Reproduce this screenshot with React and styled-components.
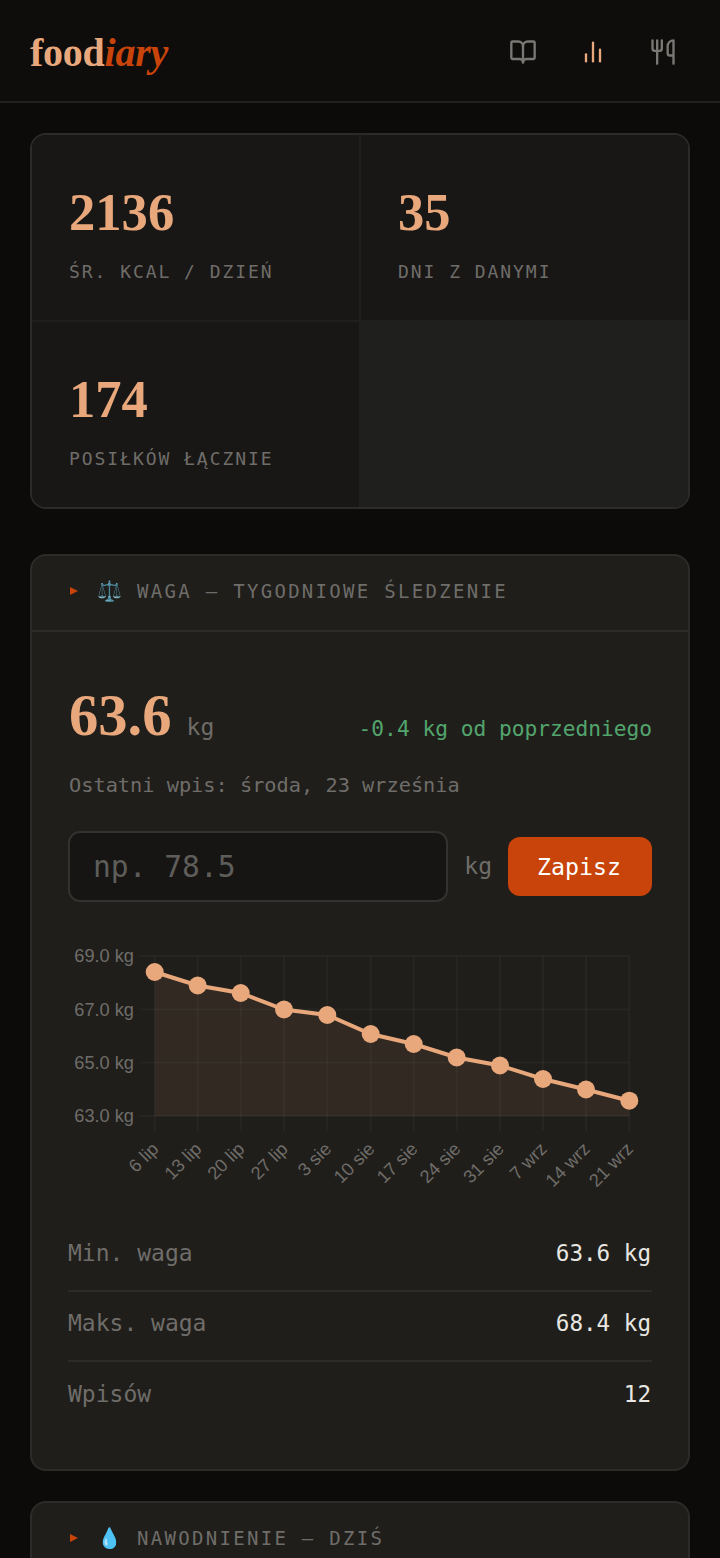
import React from "react";
import styled, { createGlobalStyle } from "styled-components";

const Global = createGlobalStyle`
  html, body { margin: 0; padding: 0; background: #0c0b0a; }
  body { font-family: "DejaVu Sans Mono", monospace; line-height: 1.6; color: #e8e6e1; }
`;
const Page = styled.div`
  width: 720px; height: 1558px; overflow: hidden; background: #0c0b0a;
`;
const Header = styled.header`
  height: 97px; display: flex; align-items: center; justify-content: space-between;
  padding: 4px 31px 0 30px; background: #0e0d0c; border-bottom: 2px solid #222120;
`;
const Logo = styled.div`
  font-family: "Liberation Serif", serif; font-weight: 700; font-size: 40px; letter-spacing: -0.25px; color: #e8a87c; line-height: 1;
  em { color: #c8440a; font-style: italic; }
`;
const Nav = styled.nav`display: flex; gap: 18px; margin-top: -2px;`;
const NavButton = styled.div`
  display: flex; padding: 12px; color: ${p => (p.$active ? "#e8a87c" : "#7a7874")};
`;
const Main = styled.main`
  padding: 30px; display: flex; flex-direction: column;
`;
const Card = styled.section`
  border: 2px solid #2c2b29; border-radius: 16px; overflow: hidden; background: #1f1e1b;
  margin-bottom: ${p => p.$mb || 30}px;
`;
const StatGrid = styled.div`
  display: grid; grid-template-columns: 1fr 1fr; gap: 2px; background: #1f1f1d;
`;
const StatCell = styled.div`
  height: 185px; box-sizing: border-box; padding: 36px 36px 36px 37px; background: #181716;
`;
const StatValue = styled.div`
  font-family: "Liberation Serif", serif; font-weight: 700; font-size: 52.6px; color: #e8a87c; line-height: 83px;
`;
const StatLabel = styled.div`
  font-size: 18px; letter-spacing: 1.95px; color: #6f6d69; line-height: 30px; margin-top: 3px;
`;
const CardHead = styled.div`
  height: 70px; display: flex; align-items: center; padding: 0 0 4px 38px; border-bottom: 2px solid #2c2b29;
`;
const Arrow = styled.span`
  width: 0; height: 0; border-left: 8px solid #c8440a; border-top: 4px solid transparent; border-bottom: 4px solid transparent;
  margin-right: 19px;
`;
const Emoji = styled.span`
  font-family: "Noto Color Emoji", sans-serif; font-size: 20px; width: 24px; text-align: center; margin-right: 16px; line-height: 1;
`;
const CardTitle = styled.span`
  font-size: 19px; letter-spacing: 2.3px; color: #6f6d69;
`;
const CardBody = styled.div`padding: 42px 36px 37px 36px;`;
const ValueRow = styled.div`display: flex; align-items: center; justify-content: space-between;`;
const Big = styled.div`
  font-family: "Liberation Serif", serif; font-weight: 700; font-size: 58.6px; color: #e8a87c; line-height: 84px; padding-left: 1px;
  small { font-family: "DejaVu Sans Mono", monospace; font-weight: 400; font-size: 23px; color: #6f6d69; margin-left: 15px; }
`;
const Delta = styled.div`font-size: 21.2px; color: #52a56d; margin-top: 14px;`;
const Sub = styled.div`font-size: 20.3px; color: #6f6d69; line-height: 32px; padding-left: 1px;`;
const InputRow = styled.div`display: flex; align-items: center; gap: 16px; margin-top: 30px;`;
const Input = styled.input`
  flex: 1; min-width: 0; height: 71px; box-sizing: border-box; padding: 0 23px; border: 2px solid #333230; border-radius: 12px;
  background: #161514; color: #e8e6e1; font: 29.6px "DejaVu Sans Mono", monospace; outline: none;
  &::placeholder { color: #5f5d5a; opacity: 1; }
`;
const Unit = styled.span`font-size: 23px; color: #6f6d69;`;
const SaveButton = styled.button`
  width: 144px; height: 59px; border: 0; border-radius: 12px; background: #c8440a; color: #fff; padding: 0 2px 0 0;
  font: 23.2px "DejaVu Sans Mono", monospace;
`;
const ChartWrap = styled.div`margin-top: 38px; height: 250px;`;
const Rows = styled.div`margin-top: 32px;`;
const Row = styled.div`
  height: 70px; padding-bottom: 6px; display: flex; align-items: center; justify-content: space-between;
  border-bottom: ${p => (p.$last ? "0" : "2px solid #2c2b29")}; box-sizing: border-box;
`;
const RowLabel = styled.span`font-size: 23px; color: #6f6d69;`;
const RowValue = styled.span`font-size: 22.6px; color: #e8e6e1; padding-right: 1px;`;

const Icon = ({ children }) => (
  <svg width="28" height="28" viewBox="0 0 24 24" fill="none" stroke="currentColor" strokeWidth="2" strokeLinecap="round" strokeLinejoin="round">
    {children}
  </svg>
);

const pts = [
  [86.7, 32], [129.7, 45.5], [172.7, 53], [216, 69.5], [259.3, 75], [302.7, 94],
  [345.7, 104], [388.7, 117.5], [432, 125.5], [475, 139], [518, 149.5], [561.3, 160.7],
];
const yTicks = [["69.0 kg", 16], ["67.0 kg", 69.5], ["65.0 kg", 122.5], ["63.0 kg", 176]];
const xLabels = ["6 lip", "13 lip", "20 lip", "27 lip", "3 sie", "10 sie", "17 sie", "24 sie", "31 sie", "7 wrz", "14 wrz", "21 wrz"];

function Chart() {
  const line = pts.map(p => p.join(",")).join(" ");
  const area = `86.7,176 ${line} 561.3,176`;
  const grid = "rgba(255,255,255,0.03)";
  return (
    <svg width="584" height="250" viewBox="0 0 584 250">
      {pts.map(([x]) => <line key={x} x1={x} x2={x} y1="16" y2="191" stroke={grid} strokeWidth="2" />)}
      {yTicks.map(([, y]) => <line key={y} x1="72" x2="561.3" y1={y} y2={y} stroke={grid} strokeWidth="2" />)}
      <polygon points={area} fill="rgba(232,150,110,0.09)" />
      <polyline points={line} fill="none" stroke="#e8a87c" strokeWidth="4" />
      {pts.map(([x, y]) => <circle key={x} cx={x} cy={y} r="9" fill="#e8a87c" />)}
      {yTicks.map(([t, y]) => (
        <text key={t} x="66" y={y + 6} textAnchor="end" fontFamily="Liberation Sans, sans-serif" fontSize="18.2" fill="#6f6d69">{t}</text>
      ))}
      {xLabels.map((t, i) => (
        <text key={t} textAnchor="end" fontFamily="Liberation Sans, sans-serif" fontSize="18.2" fill="#6f6d69"
          transform={`translate(${pts[i][0] + 5} ${210}) rotate(-45)`}>{t}</text>
      ))}
    </svg>
  );
}

export default function App() {
  return (
    <Page>
      <Global />
      <Header>
        <Logo>food<em>iary</em></Logo>
        <Nav>
          <NavButton>
            <Icon><path d="M12 7v14" /><path d="M3 18a1 1 0 0 1-1-1V4a1 1 0 0 1 1-1h5a4 4 0 0 1 4 4 4 4 0 0 1 4-4h5a1 1 0 0 1 1 1v13a1 1 0 0 1-1 1h-6a3 3 0 0 0-3 3 3 3 0 0 0-3-3z" /></Icon>
          </NavButton>
          <NavButton $active>
            <Icon><path d="M18 20V10" /><path d="M12 20V4" /><path d="M6 20v-6" /></Icon>
          </NavButton>
          <NavButton>
            <Icon><path d="M3 2v7c0 1.1.9 2 2 2h4a2 2 0 0 0 2-2V2" /><path d="M7 2v20" /><path d="M21 15V2a5 5 0 0 0-5 5v6c0 1.1.9 2 2 2h3Zm0 0v7" /></Icon>
          </NavButton>
        </Nav>
      </Header>
      <Main>
        <Card $mb={45}>
          <StatGrid>
            <StatCell><StatValue>2136</StatValue><StatLabel>ŚR. KCAL / DZIEŃ</StatLabel></StatCell>
            <StatCell><StatValue>35</StatValue><StatLabel>DNI Z DANYMI</StatLabel></StatCell>
            <StatCell><StatValue>174</StatValue><StatLabel>POSIŁKÓW ŁĄCZNIE</StatLabel></StatCell>
          </StatGrid>
        </Card>
        <Card>
          <CardHead><Arrow /><Emoji>⚖️</Emoji><CardTitle>WAGA — TYGODNIOWE ŚLEDZENIE</CardTitle></CardHead>
          <CardBody>
            <ValueRow>
              <Big>63.6<small>kg</small></Big>
              <Delta>-0.4 kg od poprzedniego</Delta>
            </ValueRow>
            <Sub>Ostatni wpis: środa, 23 września</Sub>
            <InputRow>
              <Input placeholder="np. 78.5" />
              <Unit>kg</Unit>
              <SaveButton>Zapisz</SaveButton>
            </InputRow>
            <ChartWrap><Chart /></ChartWrap>
            <Rows>
              <Row><RowLabel>Min. waga</RowLabel><RowValue>63.6 kg</RowValue></Row>
              <Row><RowLabel>Maks. waga</RowLabel><RowValue>68.4 kg</RowValue></Row>
              <Row $last><RowLabel>Wpisów</RowLabel><RowValue>12</RowValue></Row>
            </Rows>
          </CardBody>
        </Card>
        <Card>
          <CardHead><Arrow /><Emoji>💧</Emoji><CardTitle>NAWODNIENIE — DZIŚ</CardTitle></CardHead>
        </Card>
      </Main>
    </Page>
  );
}
